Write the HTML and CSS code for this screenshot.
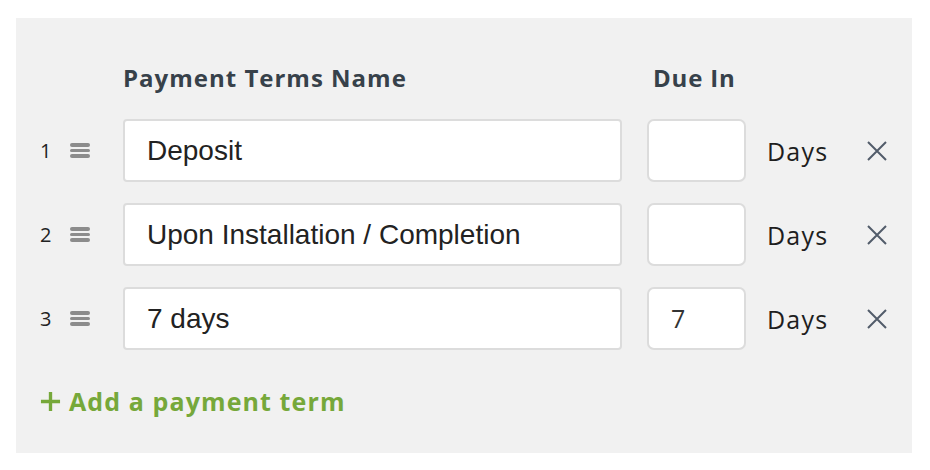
FILE: index.html
```html
<!DOCTYPE html>
<html>
<head>
<meta charset="utf-8">
<link rel="stylesheet" href="styles.css">
</head>
<body>
<div class="panel">
  <div class="head">
    <div class="h-name">Payment Terms Name</div>
    <div class="h-due">Due In</div>
  </div>
  <div class="row">
    <span class="num">1</span>
    <span class="grip"><i></i><i></i><i></i></span>
    <div class="name">Deposit</div>
    <div class="due"></div>
    <span class="days">Days</span>
    <svg class="x" viewBox="0 0 20 20"><path d="M1 1L19 19M19 1L1 19"/></svg>
  </div>
  <div class="row">
    <span class="num">2</span>
    <span class="grip"><i></i><i></i><i></i></span>
    <div class="name">Upon Installation / Completion</div>
    <div class="due"></div>
    <span class="days">Days</span>
    <svg class="x" viewBox="0 0 20 20"><path d="M1 1L19 19M19 1L1 19"/></svg>
  </div>
  <div class="row">
    <span class="num">3</span>
    <span class="grip"><i></i><i></i><i></i></span>
    <div class="name">7 days</div>
    <div class="due">7</div>
    <span class="days">Days</span>
    <svg class="x" viewBox="0 0 20 20"><path d="M1 1L19 19M19 1L1 19"/></svg>
  </div>
  <div class="add"><svg class="plus" viewBox="0 0 22 22"><path d="M11 1V21M1 11H21"/></svg>Add a payment term</div>
</div>
</body>
</html>
```
FILE: styles.css
```css
html, body { margin: 0; padding: 0; background: #fff; }
.panel {
  margin: 18px 0 0 16px;
  width: 896px;
  height: 435px;
  box-sizing: border-box;
  background: #f1f1f1;
  padding-top: 44px;
  font-family: "Open Sans", sans-serif;
}
.head {
  display: flex;
  height: 57px;
  font-weight: 700;
  font-size: 24px;
  color: #37414a;
  line-height: 32px;
}
.h-name { margin-left: 107px; width: 530px; letter-spacing: 1px; }
.h-due { letter-spacing: 0.8px; }
.row {
  display: flex;
  align-items: center;
  height: 63px;
  margin-bottom: 21px;
}
.num {
  width: 30px;
  margin-left: 24px;
  font-size: 20px;
  color: #222;
}
.grip {
  display: flex;
  flex-direction: column;
  gap: 2px;
  width: 20px;
}
.grip i { display: block; height: 3.5px; background: #8c8c8c; border-radius: 2px; }
.name {
  margin-left: 33px;
  width: 499px;
  height: 63px;
  box-sizing: border-box;
  border: 2px solid #dcdcdc;
  border-radius: 4px;
  background: #fff;
  font-family: "Liberation Sans", Arial, sans-serif;
  font-size: 28px;
  color: #222;
  line-height: 59px;
  padding-left: 22px;
}
.due {
  margin-left: 25px;
  width: 99px;
  height: 63px;
  box-sizing: border-box;
  border: 2px solid #dcdcdc;
  border-radius: 7px;
  background: #fff;
  font-size: 25px;
  color: #333;
  line-height: 59px;
  padding-left: 22px;
}
.days {
  margin-left: 21px;
  font-size: 25px;
  color: #1e1e1e;
  width: 78px;
  letter-spacing: 1.2px;
}
.x { width: 20px; height: 20px; margin-left: 22px; }
.x path { stroke: #525c6a; stroke-width: 2; fill: none; }
.add {
  display: flex;
  align-items: center;
  margin-top: 34px;
  margin-left: 24px;
  font-size: 25px;
  font-weight: 700;
  color: #76a83a;
  letter-spacing: 1.1px;
}
.plus { width: 21px; height: 21px; margin-right: 8px; }
.plus path { stroke: #76a83a; stroke-width: 3.5; fill: none; }
```
